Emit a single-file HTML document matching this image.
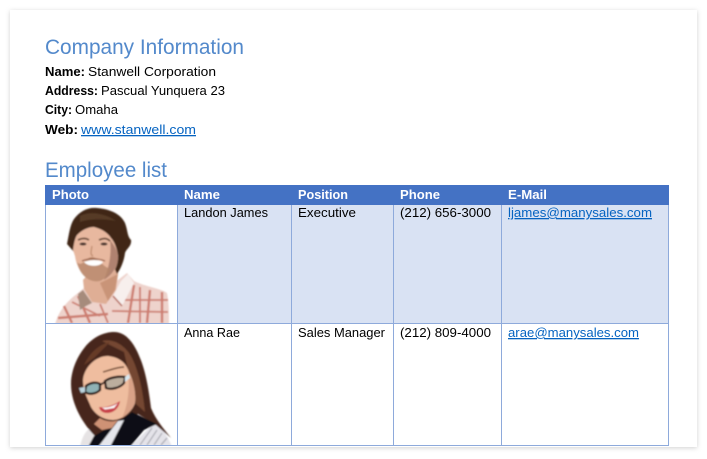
<!DOCTYPE html>
<html><head><meta charset="utf-8"><style>
html,body{margin:0;padding:0;width:707px;height:459px;overflow:hidden;background:#fff}
svg{display:block}
text{font-family:"Liberation Sans",sans-serif;font-size:13px;fill:#000}
.b{font-weight:bold}
.h{font-weight:bold;fill:#fff}
.t{font-size:21.5px;fill:#5389cb}
.l{fill:#0563c1;text-decoration:underline}
</style></head><body>
<svg width="707" height="459" viewBox="0 0 707 459" xmlns="http://www.w3.org/2000/svg">
<defs>
<filter id="s" x="-5%" y="-5%" width="110%" height="110%"><feGaussianBlur stdDeviation="2.5"/></filter>
<filter id="p" x="-5%" y="-5%" width="110%" height="110%"><feGaussianBlur stdDeviation="0.75"/></filter>
<clipPath id="c1"><rect x="46" y="206" width="131" height="117"/></clipPath>
<clipPath id="c2"><rect x="46" y="324" width="131" height="121"/></clipPath>
</defs>
<rect x="10" y="11" width="687" height="437" fill="#d0d0d0" filter="url(#s)"/>
<rect x="10" y="10" width="687" height="437" fill="#fff"/>

<text x="45" y="54" class="t" textLength="199" lengthAdjust="spacingAndGlyphs">Company Information</text>
<text x="45" y="76" class="b" textLength="40" lengthAdjust="spacingAndGlyphs">Name:</text><text x="88" y="76" textLength="128" lengthAdjust="spacingAndGlyphs">Stanwell Corporation</text>
<text x="45" y="95" class="b" textLength="53" lengthAdjust="spacingAndGlyphs">Address:</text><text x="101" y="95" textLength="124" lengthAdjust="spacingAndGlyphs">Pascual Yunquera 23</text>
<text x="45" y="114" class="b" textLength="27" lengthAdjust="spacingAndGlyphs">City:</text><text x="75" y="114" textLength="43" lengthAdjust="spacingAndGlyphs">Omaha</text>
<text x="45" y="134" class="b" textLength="33" lengthAdjust="spacingAndGlyphs">Web:</text><text x="81" y="134" class="l" textLength="115" lengthAdjust="spacingAndGlyphs">www.stanwell.com</text>
<text x="45" y="177" class="t" textLength="122" lengthAdjust="spacingAndGlyphs">Employee list</text>

<rect x="178" y="205" width="491" height="118" fill="#d9e2f3"/>
<rect x="45" y="185" width="624" height="20" fill="#4472c4"/>
<g stroke="#8eaadb" stroke-width="1" fill="none">
<path d="M45.5 205V445.5H668.5V205M177.5 205V445.5M291.5 205V445.5M393.5 205V445.5M501.5 205V445.5M45 323.5H669"/>
</g>
<text x="52" y="199" class="h" textLength="37" lengthAdjust="spacingAndGlyphs">Photo</text>
<text x="184" y="199" class="h" textLength="36" lengthAdjust="spacingAndGlyphs">Name</text>
<text x="298" y="199" class="h" textLength="50" lengthAdjust="spacingAndGlyphs">Position</text>
<text x="400" y="199" class="h" textLength="40" lengthAdjust="spacingAndGlyphs">Phone</text>
<text x="508" y="199" class="h" textLength="39" lengthAdjust="spacingAndGlyphs">E-Mail</text>

<text x="184" y="217" textLength="84" lengthAdjust="spacingAndGlyphs">Landon James</text>
<text x="298" y="217" textLength="58" lengthAdjust="spacingAndGlyphs">Executive</text>
<text x="400" y="217" textLength="91" lengthAdjust="spacingAndGlyphs">(212) 656-3000</text>
<text x="508" y="217" class="l" textLength="144" lengthAdjust="spacingAndGlyphs">ljames@manysales.com</text>
<text x="184" y="337" textLength="56" lengthAdjust="spacingAndGlyphs">Anna Rae</text>
<text x="298" y="337" textLength="87" lengthAdjust="spacingAndGlyphs">Sales Manager</text>
<text x="400" y="337" textLength="91" lengthAdjust="spacingAndGlyphs">(212) 809-4000</text>
<text x="508" y="337" class="l" textLength="131" lengthAdjust="spacingAndGlyphs">arae@manysales.com</text>

<!-- man -->
<g clip-path="url(#c1)">
<g filter="url(#p)">
<path d="M55 325C58 312 66 302 78 293L84 288L118 280L127 273L134 281C146 287 160 288 167 293C169 303 169 313 169 325Z" fill="#eed3cc"/>
<g stroke="#c4685a" fill="none" opacity=".8">
<path stroke-width="2.4" d="M64 306L72 323M78 296L90 323M134 285L128 323M150 290L147 323M162 292L162 323M58 318L108 314"/>
<path stroke-width="1.8" d="M72 302L100 316M118 300L168 300M112 311L168 312M100 304L108 323M140 287L140 323"/>
</g>
<path d="M121 281L128 274L134 283L122 306L113 296Z" fill="#f7efed"/>
<path d="M113 296L122 306" stroke="#b4675a" stroke-width="1.5"/>
<path d="M78 294L83 290L92 303L86 306L80 310Z" fill="#a68b7c"/>
<path d="M83 280L84 289L92 302L106 304L116 290L119 266L90 272Z" fill="#dfae95"/>
<path d="M100 283L118 274L115 290L108 301Z" fill="#c99478"/>
<path d="M67 244C69 234 70 225 74 219C80 211 88 207 97 208C110 209 121 214 125 223C128 231 127 236 131 240C132 246 126 249 125 253C124 261 121 268 117 274L110 258L110 240L74 252Z" fill="#3f2819"/>
<path d="M80 216C90 211 104 213 116 221C108 219 90 218 80 222Z" fill="#5e402c" opacity=".8"/>
<path d="M73 250C74 243 75 238 77 235C82 230 88 227 94 227C102 229 108 233 111 238C114 241 117 248 118 256C118 266 114 273 108 278C102 283 92 282 86 277C80 272 76 264 75 256Z" fill="#e8b89f"/>
<path d="M110 240C115 246 118 252 118 258C117 268 112 275 104 280C109 268 112 252 110 240Z" fill="#b08270"/>
<path d="M77 262C80 276 90 283 100 281C106 279 110 273 111 268C105 270 98 257 92 257C86 257 82 268 77 262Z" fill="#b58669" opacity=".8"/>
<path d="M78 240C82 238 86 238 89 240M99 240C103 238 107 238 110 241" stroke="#5b3d2c" stroke-width="1.6" fill="none"/>
<ellipse cx="83" cy="244" rx="3.5" ry="1.5" fill="#463229"/><ellipse cx="104" cy="244" rx="3.5" ry="1.5" fill="#463229"/>
<path d="M92 246C91 252 90 255 93 256" stroke="#bd8a6c" stroke-width="1.2" fill="none"/>
<path d="M84 262C89 260 98 259 103 262C100 267 88 267 84 262Z" fill="#fff"/>
<path d="M82 261C88 258 98 258 105 261" stroke="#8a4f38" stroke-width="1" fill="none"/>
</g>
</g>

<!-- woman -->
<g clip-path="url(#c2)">
<g filter="url(#p)">
<path d="M80 447C82 437 85 432 90 428L100 430L92 447Z" fill="#e6e3e4"/>
<path d="M130 447L155 422C160 426 168 436 172 447Z" fill="#e4e3e9"/>
<path d="M140 445L152 428M147 445L157 430M154 445L162 433M161 445L167 438" stroke="#8a8a94" stroke-width="1" opacity=".8"/>
<path d="M71 384C71 372 76 358 85 347C93 337 104 332 114 332C127 332 135 345 140 358C146 372 149 392 151 408C156 420 163 428 171 438L156 425L138 414L95 436C84 425 71 405 71 384Z" fill="#47251a"/>
<path d="M102 341C114 338 126 346 132 358C139 372 143 392 145 412L136 404L124 352Z" fill="#754730"/>
<path d="M84 365C90 352 100 344 110 342L94 358Z" fill="#663a26"/>
<path d="M88 447L94 436L118 422L132 412L157 424L144 430L130 447Z" fill="#111116"/>
<path d="M98 447L118 421L124 420L110 447Z" fill="#e5e6ec"/>
<path d="M83 380C84 368 95 356 108 356C118 357 126 362 129 372C134 382 136 394 135 403C132 412 122 420 113 420C103 420 95 414 91 407C88 399 83 392 83 380Z" fill="#efbd9f"/>
<path d="M128 372C134 382 136 394 135 403C132 410 127 415 122 418C128 405 130 388 128 372Z" fill="#d9a287"/>
<path d="M100 418C106 422 114 422 118 420L112 428L102 430L94 424Z" fill="#cf9274"/>
<path d="M86 386C91 382 97 382 100 384L100 390C96 394 89 395 85 392Z" fill="#8fb2b6" stroke="#22100b" stroke-width="2.2"/>
<path d="M105 381C111 377 120 376 125 377L124 383C120 388 111 390 106 388Z" fill="#bcae9e" stroke="#22100b" stroke-width="2.2"/>
<path d="M100 385L105 382" stroke="#22100b" stroke-width="1.8"/>
<path d="M79 388L85 387L85 392L81 393Z" fill="#bcd4de"/>
<path d="M125 377L129 374L130 378L125 382Z" fill="#d8e8f0"/>
<path d="M103 372C110 370 118 367 124 367" stroke="#6f4a32" stroke-width="1.4" fill="none"/>
<path d="M99 407C106 408 114 405 120 401C119 408 114 413 107 413C103 413 100 411 99 407Z" fill="#c8404a"/>
<path d="M102 407.500C108 408 114 406 118 403L114 408L105 409.500Z" fill="#fff"/>
</g>
</g>
</svg>
</body></html>
